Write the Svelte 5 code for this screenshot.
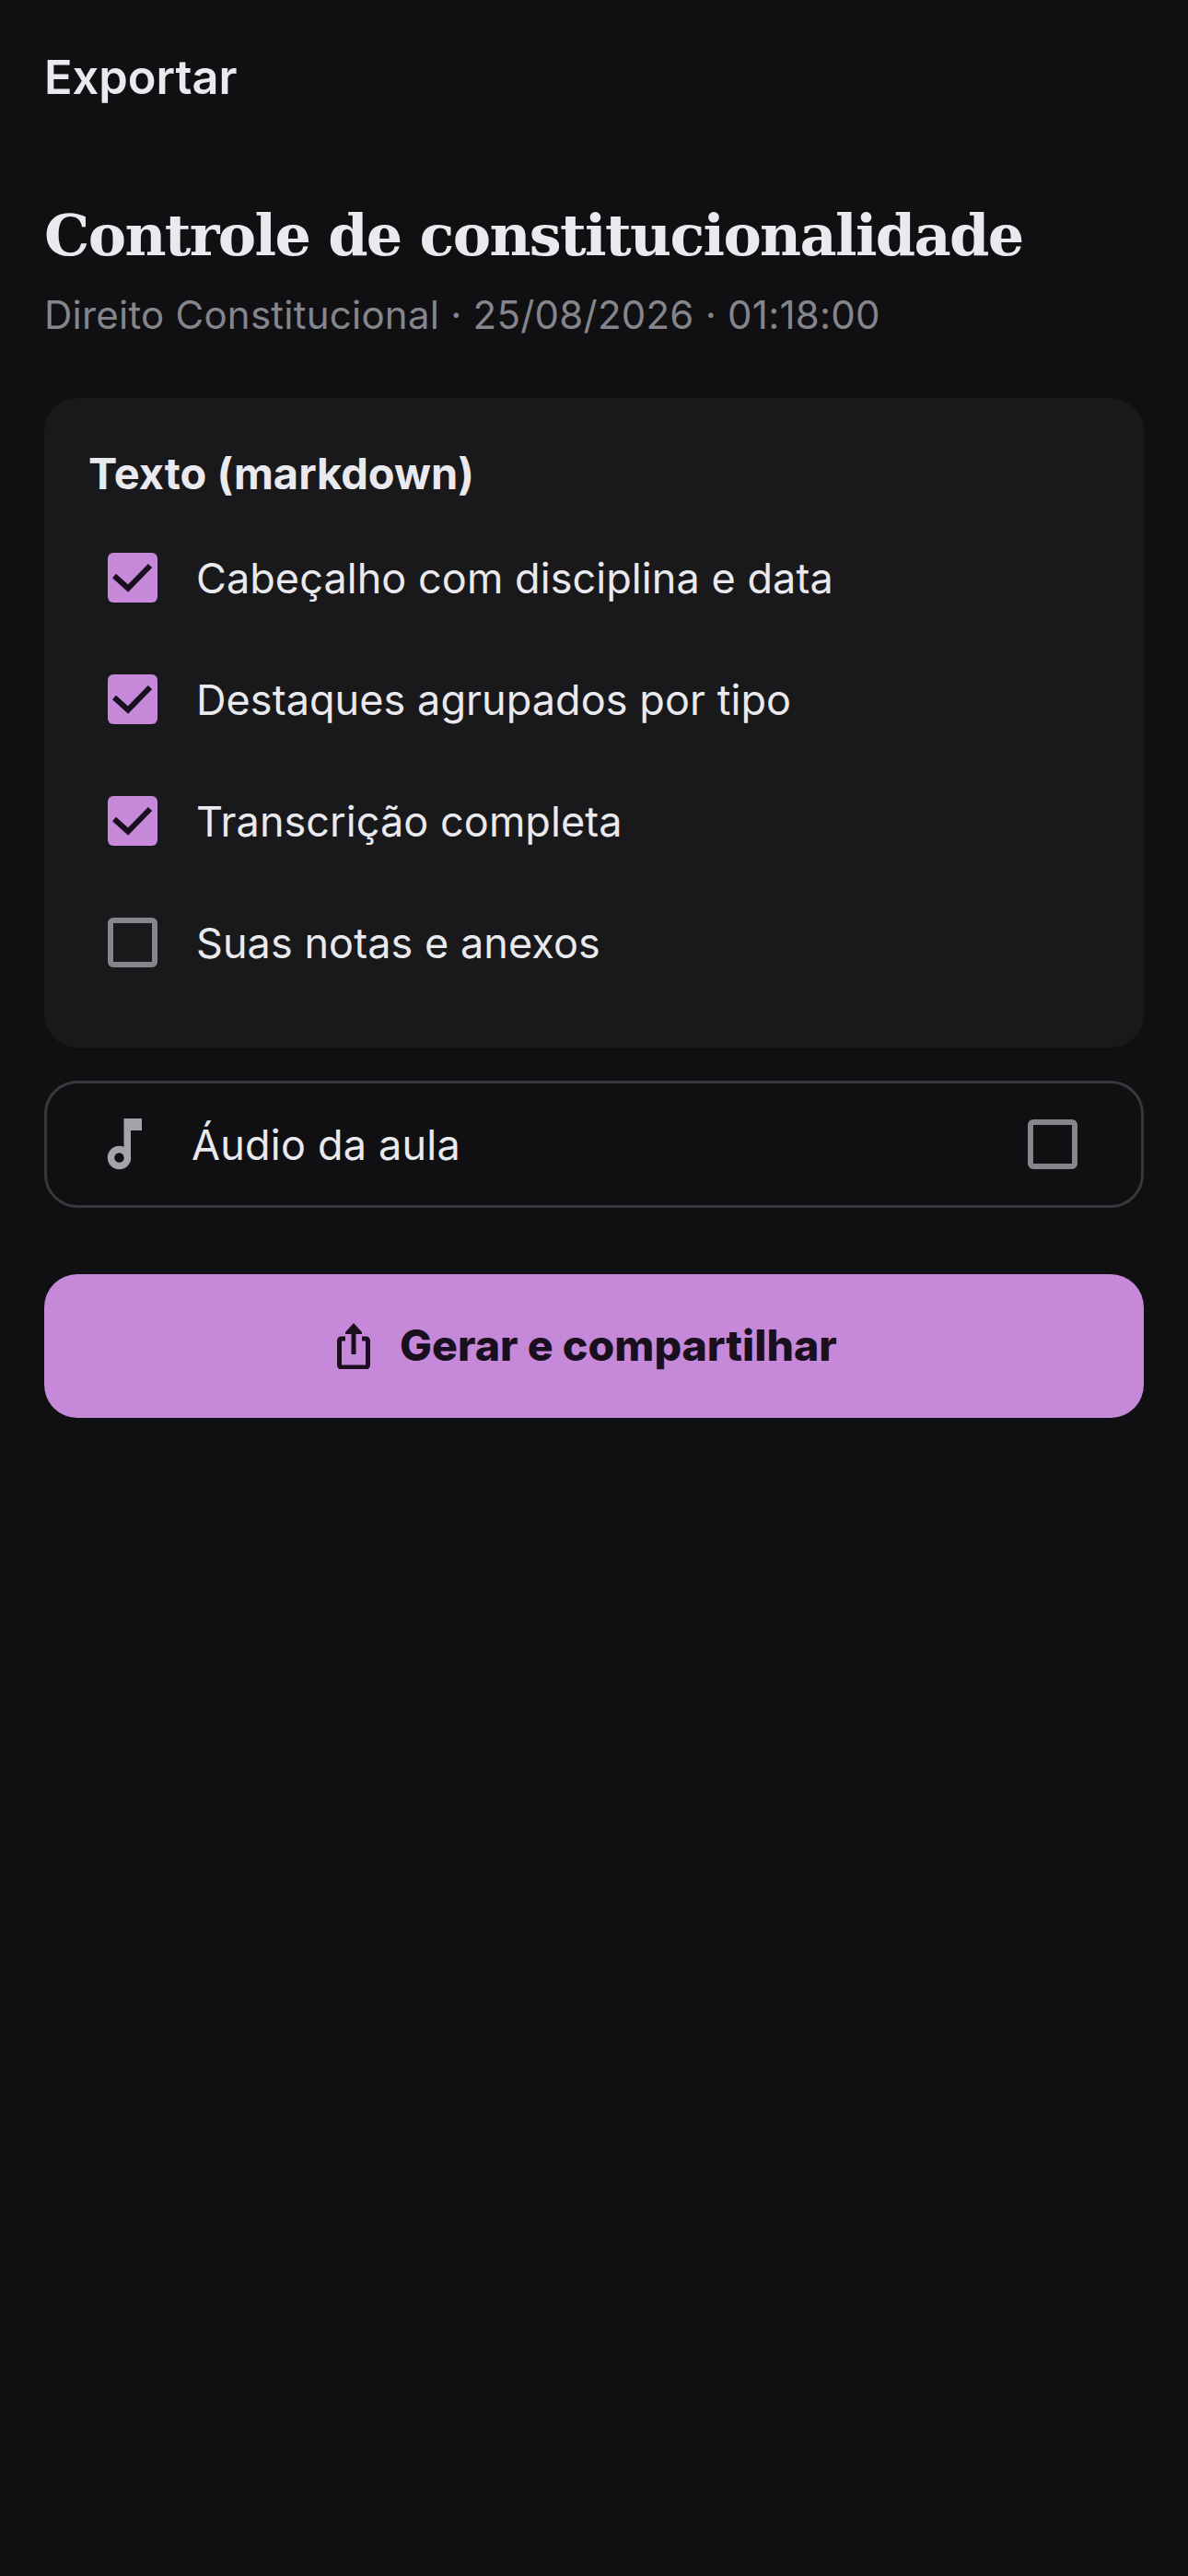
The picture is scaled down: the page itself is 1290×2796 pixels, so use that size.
<script>
    const items = [
        { label: "Cabeçalho com disciplina e data", checked: true },
        { label: "Destaques agrupados por tipo", checked: true },
        { label: "Transcrição completa", checked: true },
        { label: "Suas notas e anexos", checked: false }
    ];
</script>

<div class="page">
    <h2 class="nav-title">Exportar</h2>

    <h1 class="title">Controle de constitucionalidade</h1>
    <p class="meta">Direito Constitucional · 25/08/2026 · 01:18:00</p>

    <section class="card">
        <h3 class="card-title">Texto (markdown)</h3>
        {#each items as item}
            <div class="row">
                <span class="box" class:checked={item.checked}>
                    {#if item.checked}
                        <svg width="54" height="54" viewBox="0 0 54 54">
                            <path d="M7 25 L22 38.5 L46 14" fill="none" stroke="#1a0f1e" stroke-width="6" />
                        </svg>
                    {/if}
                </span>
                <span class="label">{item.label}</span>
            </div>
        {/each}
    </section>

    <div class="audio">
        <svg class="note" width="40" height="56" viewBox="0 0 40 56">
            <circle cx="13.5" cy="42.5" r="9" fill="none" stroke="#a3a3ab" stroke-width="7.5" />
            <path d="M18.5 42 V0 H38 V13 H26 V42 Z" fill="#a3a3ab" />
        </svg>
        <span class="label audio-label">Áudio da aula</span>
        <span class="box"></span>
    </div>

    <button class="primary">
        <svg width="36" height="50" viewBox="0 0 36 50">
            <path d="M9 17 H5 Q2.5 17 2.5 19.5 V45.5 Q2.5 48 5 48 H31 Q33.500 48 33.500 45.500 V19.500 Q33.500 17 31 17 H27" fill="none" stroke="#1a0f1e" stroke-width="5" />
            <path d="M18 34 V3" fill="none" stroke="#1a0f1e" stroke-width="5" />
            <path d="M18 0 L27 10 V12 H9 V10 Z" fill="#1a0f1e" />
        </svg>
        <span class="primary-label">Gerar e compartilhar</span>
    </button>
</div>

<style>
    :global(body) {
        margin: 0;
        background: #101013;
    }
    .page {
        box-sizing: border-box;
        width: 1290px;
        height: 2796px;
        padding: 52px 48px 0;
        background: #101013;
        font-family: Inter, "Noto Sans", sans-serif;
        color: #e9e9ee;
    }
    .nav-title {
        margin: 0;
        font-size: 50.5px;
        line-height: 64px;
        font-weight: 600;
    }
    .title {
        margin: 98px 0 0;
        font-family: "DejaVu Serif", serif;
        font-size: 62px;
        line-height: 84px;
        font-weight: 700;
        letter-spacing: -1.65px;
    }
    .meta {
        margin: 18px 0 0;
        font-size: 42px;
        line-height: 52px;
        letter-spacing: 0.24px;
        color: #85858c;
    }
    .card {
        margin-top: 64px;
        padding: 52px 48px 48px;
        border-radius: 36px;
        background: #19191b;
    }
    .card-title {
        margin: 0 0 17px;
        font-size: 47px;
        line-height: 60px;
        font-weight: 700;
    }
    .row {
        display: flex;
        align-items: center;
        gap: 42px;
        height: 132px;
        padding-left: 21px;
    }
    .box {
        box-sizing: border-box;
        flex: none;
        width: 54px;
        height: 54px;
        border: 6px solid #85858c;
        border-radius: 6px;
    }
    .box.checked {
        border: 0;
        background: #c688d8;
    }
    .box svg {
        display: block;
    }
    .label {
        padding-top: 2px;
        font-size: 45px;
        line-height: 56px;
        letter-spacing: 0.06px;
    }
    .audio {
        box-sizing: border-box;
        display: flex;
        align-items: center;
        height: 138px;
        margin-top: 36px;
        padding: 0 69px 0 65px;
        border: 3px solid #38383c;
        border-radius: 36px;
    }
    .note {
        flex: none;
    }
    .audio-label {
        flex: 1;
        margin-left: 52px;
        letter-spacing: 0.2px;
    }
    .primary {
        display: flex;
        align-items: center;
        justify-content: center;
        gap: 32px;
        width: 100%;
        height: 156px;
        margin-top: 72px;
        padding: 0 15px 0 0;
        border: 0;
        border-radius: 36px;
        background: #c688d8;
        color: #1a0f1e;
        font-family: inherit;
        font-size: 46.500px;
        font-weight: 800;
    }
    .primary-label {
        margin-top: -2px;
    }
</style>
